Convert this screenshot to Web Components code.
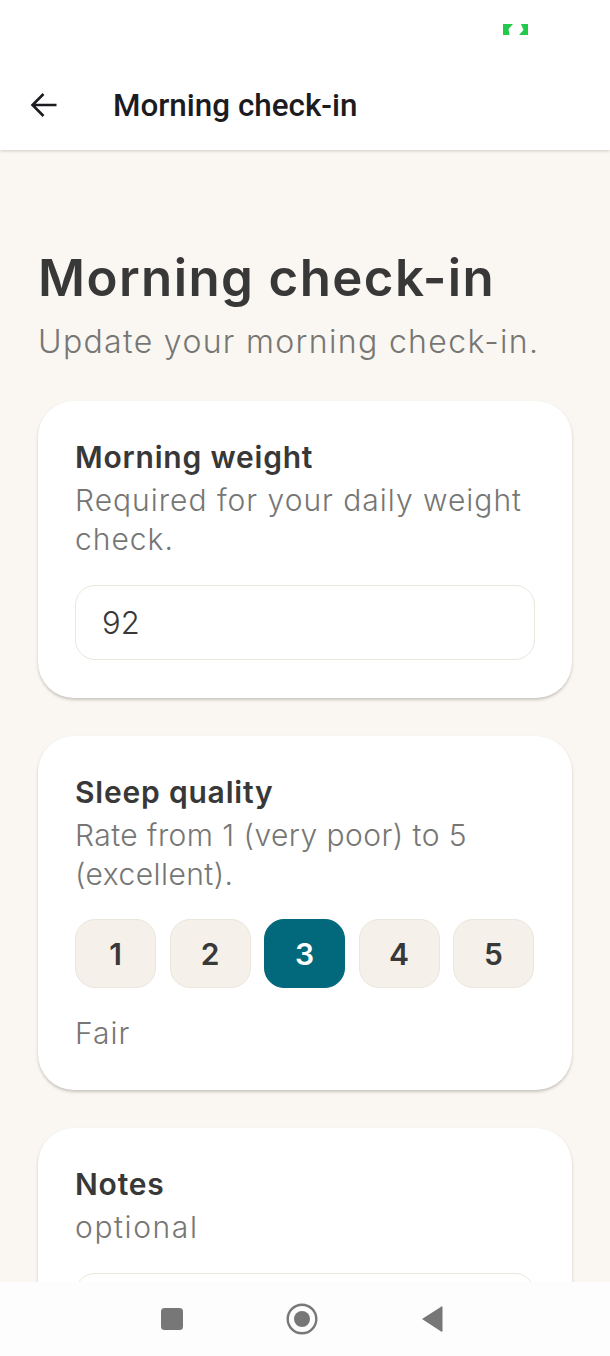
<!DOCTYPE html>
<html>
<head>
<meta charset="utf-8">
<title>Morning check-in</title>
<style>
	html, body { margin: 0; height: 100%; background: #faf7f2; }
</style>
</head>
<body>
<check-in-screen>
	<app-bar slot="top" label="Morning check-in"></app-bar>
	<h-intro title="Morning check-in" sub="Update your morning check-in."></h-intro>
	<check-card heading="Morning weight" hint="Required for your daily weight check." style="--hint-track: 1px">
		<text-box value="92"></text-box>
	</check-card>
	<check-card heading="Sleep quality" hint="Rate from 1 (very poor) to 5 (excellent)." style="--hint-track: .45px">
		<rating-row selected="3" caption="Fair"></rating-row>
	</check-card>
	<check-card heading="Notes" hint="optional" style="--hint-track: 1.6px">
		<text-box></text-box>
	</check-card>
</check-in-screen>
<script>
'use strict';

const FONT = `Inter, "Open Sans", sans-serif`;

window.customElements.define('check-in-screen', class extends HTMLElement {
	constructor () {
		super();
		this.attachShadow({mode: 'open'}).innerHTML = `
			<style>
				:host {
					display: flex;
					flex-direction: column;
					height: 1356px;
					overflow: hidden;
					background: #faf7f2;
					font-family: ${FONT};
				}
				.status {
					height: 72px;
					flex: none;
					background: #fff;
					display: flex;
					justify-content: flex-end;
					padding: 24px 82px 0 0;
					box-sizing: border-box;
				}
				main {
					flex: 1;
					min-height: 0;
					overflow: hidden;
					padding: 0 38px;
					display: flex;
					flex-direction: column;
					gap: 38px;
				}
				nav {
					flex: none;
					height: 74px;
					background: #fdfdfd;
					display: flex;
					align-items: center;
					justify-content: center;
					gap: 102px;
					padding-right: 6px;
					box-sizing: border-box;
				}
				svg { display: block; }
			</style>
			<div class="status">
				<svg width="25" height="11" viewBox="0 0 25 11" aria-hidden="true">
					<path d="M0 0h10L5.500 5l1 6H0z M18 0h7v11h-9l4.500-5z" fill="#22c94a"/>
				</svg>
			</div>
			<slot name="top"></slot>
			<main><slot></slot></main>
			<nav>
				<svg width="24" height="24" viewBox="0 0 24 24" aria-hidden="true"><rect x="1" y="1" width="22" height="22" rx="3.5" fill="#777"/></svg>
				<svg width="32" height="32" viewBox="0 0 32 32" aria-hidden="true"><circle cx="16" cy="16" r="14.300" fill="none" stroke="#777" stroke-width="2.400"/><circle cx="16" cy="16" r="8" fill="#777"/></svg>
				<svg width="24" height="28" viewBox="0 0 24 28" aria-hidden="true"><path d="M21.500 1.500c.5-.3 1-.1 1 .6v24c0 .7-.5.9-1 .6L2 14z" fill="#777"/></svg>
			</nav>
		`;
	}
});

window.customElements.define('app-bar', class extends HTMLElement {
	constructor () {
		super();
		this.attachShadow({mode: 'open'}).innerHTML = `
			<style>
				:host {
					display: flex;
					align-items: center;
					height: 78px;
					padding: 0 0 10px 30px;
					box-sizing: border-box;
					background: #fff;
					position: relative;
					box-shadow: 0 1px 3px rgba(60, 50, 40, .22);
					clip-path: inset(0 0 -8px 0);
				}
				svg { display: block; flex: none; }
				span {
					margin-left: 55px;
					font: 500 31.400px/1 Roboto, sans-serif;
					color: #1c1b1f;
				}
			</style>
			<svg width="28" height="26" viewBox="0 0 28 26" aria-hidden="true">
				<path d="M26.500 12H3 M13.500 1 2.500 12l11 11" fill="none" stroke="#1c1b1f" stroke-width="2.600"/>
			</svg>
			<span></span>
		`;
		this.shadowRoot.querySelector('span').textContent = this.getAttribute('label');
	}
});

window.customElements.define('h-intro', class extends HTMLElement {
	constructor () {
		super();
		this.attachShadow({mode: 'open'}).innerHTML = `
			<style>
				:host {
					display: block;
					padding-top: 98px;
					margin-bottom: 1px;
				}
				h1 {
					margin: 0;
					font: 600 51px/60px ${FONT};
					letter-spacing: 1.400px;
					color: #383838;
				}
				p {
					margin: 14px 0 0;
					font: 300 32px/40px ${FONT};
					letter-spacing: 1.340px;
					color: #767674;
				}
			</style>
			<h1></h1>
			<p></p>
		`;
		this.shadowRoot.querySelector('h1').textContent = this.getAttribute('title');
		this.shadowRoot.querySelector('p').textContent = this.getAttribute('sub');
	}
});

window.customElements.define('check-card', class extends HTMLElement {
	constructor () {
		super();
		this.attachShadow({mode: 'open'}).innerHTML = `
			<style>
				:host {
					display: block;
					flex: none;
					background: #fff;
					border-radius: 36px;
					padding: 38px 37px;
					box-shadow: 0 2px 3px rgba(60, 50, 40, .25);
				}
				h2 {
					margin: 0;
					font: 600 30px/36px ${FONT};
					letter-spacing: .8px;
					color: #383838;
				}
				p {
					margin: 6px 0 26px;
					font: 300 30px/39px ${FONT};
					letter-spacing: var(--hint-track, 1px);
					color: #767674;
				}
			</style>
			<h2></h2>
			<p></p>
			<slot></slot>
		`;
		this.shadowRoot.querySelector('h2').textContent = this.getAttribute('heading');
		this.shadowRoot.querySelector('p').textContent = this.getAttribute('hint');
	}
});

window.customElements.define('text-box', class extends HTMLElement {
	constructor () {
		super();
		this.attachShadow({mode: 'open'}).innerHTML = `
			<style>
				:host {
					display: flex;
					align-items: center;
					height: 75px;
					box-sizing: border-box;
					padding: 0 26px;
					border: 1.500px solid #ebe6dc;
					border-radius: 20px;
					background: #fff;
					font: 300 31px/1 ${FONT};
					color: #383838;
				}
			</style>
			<span></span>
		`;
		this.shadowRoot.querySelector('span').textContent = this.getAttribute('value') || '';
	}
});

window.customElements.define('rating-row', class extends HTMLElement {
	constructor () {
		super();
		const selected = this.getAttribute('selected');
		let buttons = '';
		for (let i = 1; i <= 5; i++) {
			buttons += `<div class="pick${String(i) === selected ? ' on' : ''}">${i}</div>`;
		}
		this.attachShadow({mode: 'open'}).innerHTML = `
			<style>
				:host { display: block; margin-top: -1px; }
				.row {
					display: grid;
					grid-template-columns: repeat(5, 81px);
					column-gap: 13.500px;
				}
				.pick {
					height: 69px;
					box-sizing: border-box;
					display: flex;
					align-items: center;
					justify-content: center;
					background: #f5f0e9;
					border: 1.500px solid #ebe6dc;
					border-radius: 20px;
					font: 600 30px/1 ${FONT};
					color: #383838;
				}
				.pick.on {
					background: #02687b;
					border-color: #02687b;
					color: #fff;
				}
				p {
					margin: 26px 0 0;
					font: 300 30px/38px ${FONT};
					letter-spacing: 1px;
					color: #767674;
				}
			</style>
			<div class="row">${buttons}</div>
			<p></p>
		`;
		this.shadowRoot.querySelector('p').textContent = this.getAttribute('caption');
	}
});
</script>
</body>
</html>
